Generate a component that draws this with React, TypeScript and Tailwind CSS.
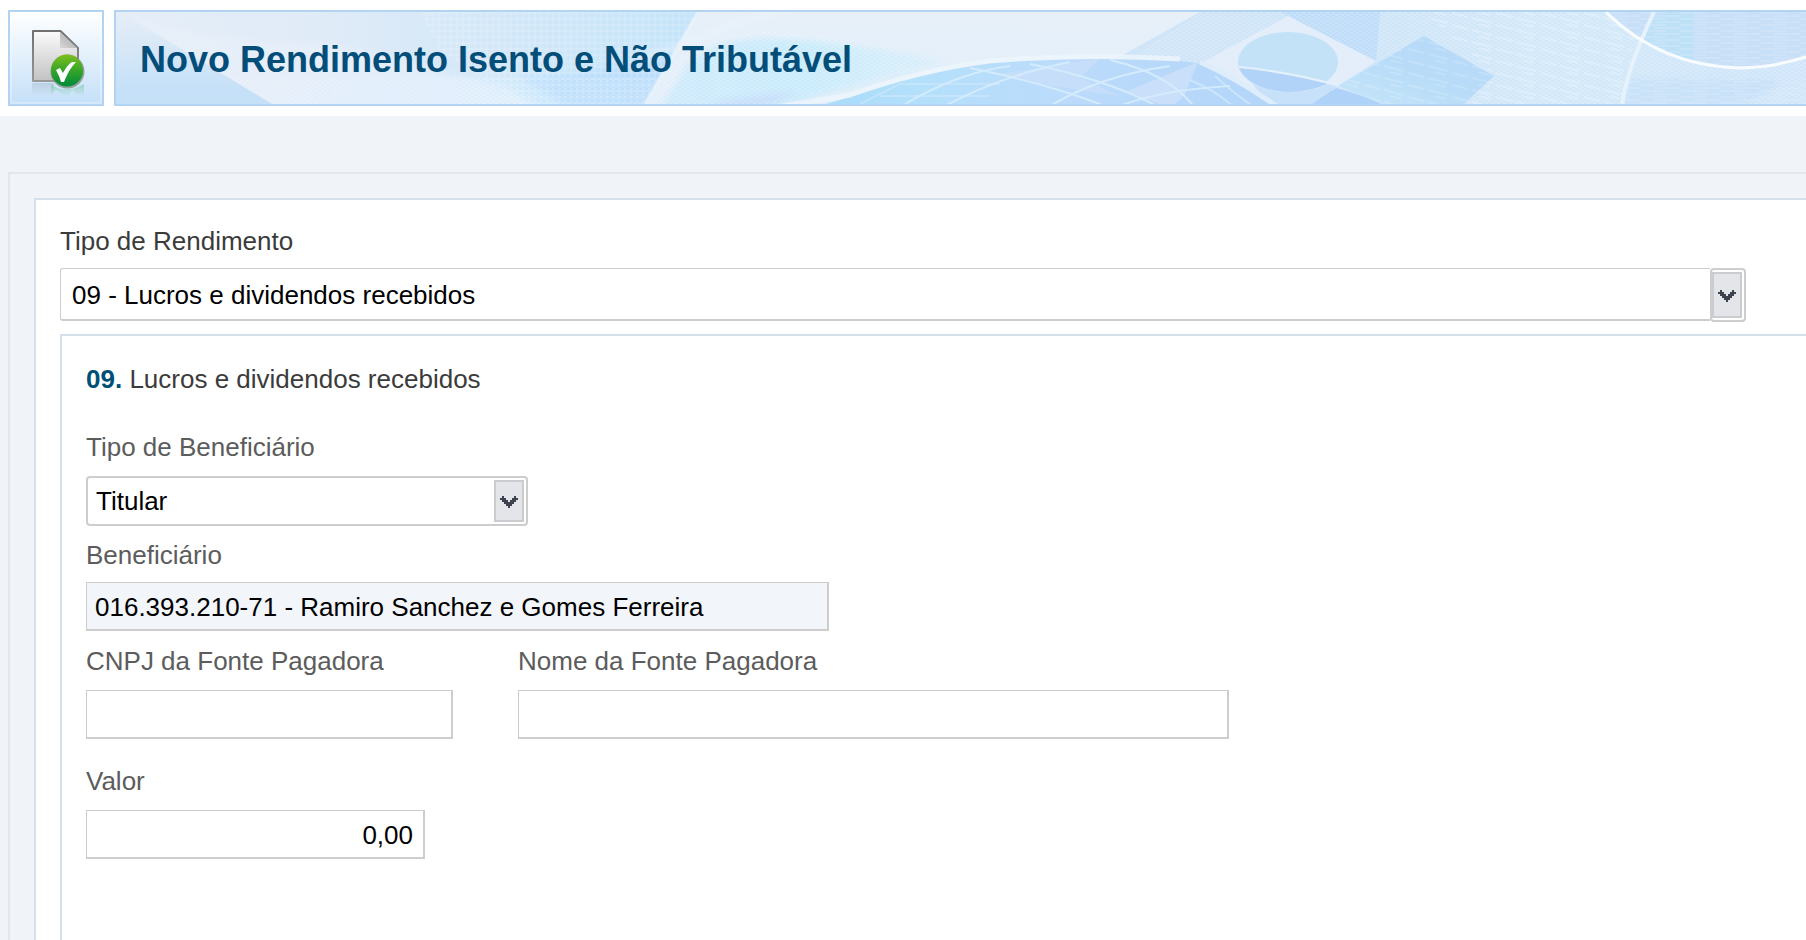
import type { ReactNode } from "react";

const fieldBorder = "border border-r-2 border-b-2 border-[#cdcdcd] outline-none";

function Chevron() {
  return (
    <svg className="w-[18px] h-3" viewBox="0 0 9 6" fill="#3d434d" shapeRendering="crispEdges" aria-hidden="true">
      <path d="M1 0h1v1h1v1h1v1h1v-1h1v-1h1v-1h1v1h1v1h-1v1h-1v1h-1v1h-1v1h-1v-1h-1v-1h-1v-1h-1v-1h-1v-1h1z" />
    </svg>
  );
}

function DocumentIcon() {
  return (
    <svg className="w-[60px] h-[76px]" viewBox="26 20 60 76" role="img" aria-label="Novo documento">
      <defs>
        <linearGradient id="paper" x1="0" y1="0" x2="0" y2="1">
          <stop offset="0" stopColor="#fbfbfb" />
          <stop offset="1" stopColor="#c2c2c2" />
        </linearGradient>
        <linearGradient id="edge" x1="0" y1="0" x2="0" y2="1">
          <stop offset="0" stopColor="#707070" />
          <stop offset="1" stopColor="#989898" />
        </linearGradient>
        <linearGradient id="fold" x1="0" y1="1" x2="1" y2="0">
          <stop offset="0" stopColor="#d6d6d6" />
          <stop offset="1" stopColor="#a4a4a4" />
        </linearGradient>
        <linearGradient id="ball" x1="0" y1="0" x2="0" y2="1">
          <stop offset="0" stopColor="#7fbf1c" />
          <stop offset="0.5" stopColor="#35a52a" />
          <stop offset="1" stopColor="#008a3a" />
        </linearGradient>
        <linearGradient id="shadow" x1="0" y1="0" x2="0" y2="1">
          <stop offset="0" stopColor="#9fb4c4" stopOpacity="0.45" />
          <stop offset="1" stopColor="#9fb4c4" stopOpacity="0" />
        </linearGradient>
        <linearGradient id="shadowGreen" x1="0" y1="0" x2="0" y2="1">
          <stop offset="0" stopColor="#6cc39a" stopOpacity="0.55" />
          <stop offset="1" stopColor="#6cc39a" stopOpacity="0" />
        </linearGradient>
      </defs>
      <rect x="32" y="83" width="22" height="13" fill="url(#shadow)" />
      <path d="M51 84q6 5 11 5h10q6-1 12-5v12h-6l-6-6-3 6h-6l-7-6-5 4z" fill="url(#shadowGreen)" />
      <path d="M33 31H60.500L78 48V81H33z" fill="url(#paper)" stroke="url(#edge)" strokeWidth="2" strokeLinejoin="round" />
      <path d="M60 32L77 48H60z" fill="url(#fold)" />
      <circle cx="67.500" cy="71.500" r="17" fill="#7d8a78" opacity="0.75" />
      <circle cx="67" cy="70.500" r="16" fill="url(#ball)" />
      <path d="M56 70l4-2 3 5q4-8 9-11h4q-7 7-12 20h-3q-2-7-5-12z" fill="#fff" />
    </svg>
  );
}

function BannerArt() {
  return (
    <svg className="absolute inset-0 w-full h-full" viewBox="116 12 1690 92" preserveAspectRatio="xMinYMin slice" aria-hidden="true">
      <defs>
        <linearGradient id="sky" x1="0" y1="0" x2="0" y2="1">
          <stop offset="0" stopColor="#e6eef8" />
          <stop offset="0.5" stopColor="#d3e6f7" />
          <stop offset="0.85" stopColor="#c5e0f8" />
          <stop offset="1" stopColor="#c4e1f8" />
        </linearGradient>
        <linearGradient id="ray" x1="0" y1="0" x2="1" y2="0">
          <stop offset="0" stopColor="#e5eef8" />
          <stop offset="0.35" stopColor="#e0ebf8" />
          <stop offset="0.6" stopColor="#d5e8f8" />
          <stop offset="1" stopColor="#c4e4f9" />
        </linearGradient>
        <linearGradient id="wave" x1="0" y1="0" x2="1" y2="0">
          <stop offset="0" stopColor="#deebf9" stopOpacity="0" />
          <stop offset="0.3" stopColor="#deedfa" />
          <stop offset="0.65" stopColor="#c8e6fb" />
          <stop offset="1" stopColor="#bddffb" />
        </linearGradient>
        <linearGradient id="dome" x1="0" y1="0" x2="1" y2="0">
          <stop offset="0" stopColor="#a3d8fa" />
          <stop offset="0.25" stopColor="#b3e0fb" />
          <stop offset="0.5" stopColor="#bcdbfb" />
          <stop offset="1" stopColor="#aed2f8" />
        </linearGradient>
        <linearGradient id="haze" x1="0" y1="0" x2="0" y2="1">
          <stop offset="0" stopColor="#e7f0f9" />
          <stop offset="1" stopColor="#e3effa" />
        </linearGradient>
        <linearGradient id="lagoon" x1="0" y1="0" x2="1" y2="0">
          <stop offset="0" stopColor="#cfeafb" />
          <stop offset="0.5" stopColor="#c9ebfb" />
          <stop offset="1" stopColor="#dceefa" />
        </linearGradient>
        <linearGradient id="mist" x1="0" y1="0" x2="1" y2="0">
          <stop offset="0" stopColor="#d2e6f6" />
          <stop offset="0.4" stopColor="#cee4f8" />
          <stop offset="0.7" stopColor="#d3e9f9" />
          <stop offset="1" stopColor="#d0e5f9" />
        </linearGradient>
        <linearGradient id="diamond" x1="0" y1="1" x2="1" y2="0">
          <stop offset="0" stopColor="#c5e5f9" />
          <stop offset="0.5" stopColor="#b8dcf8" />
          <stop offset="1" stopColor="#b5d8f8" />
        </linearGradient>
        <pattern id="mesh" width="6" height="6" patternUnits="userSpaceOnUse">
          <path d="M0 1h6M1 0v6" stroke="#fff" strokeWidth="1" opacity="0.25" />
        </pattern>
        <pattern id="grain" width="6" height="4" patternUnits="userSpaceOnUse">
          <path d="M0 1h3M3 3h3" stroke="#fff" strokeWidth="2" opacity="0.14" />
        </pattern>
        <pattern id="streaks" width="44" height="12" patternUnits="userSpaceOnUse">
          <path d="M0 1l16 4M20 6l20 5M26 0l12 3" stroke="#fff" strokeWidth="2" opacity="0.22" />
        </pattern>
        <pattern id="lines" width="40" height="6" patternUnits="userSpaceOnUse">
          <path d="M0 1h26M14 4h26" stroke="#e2edfa" strokeWidth="1" opacity="0.5" />
        </pattern>
        <filter id="soft" x="-5%" y="-20%" width="110%" height="140%">
          <feGaussianBlur stdDeviation="3" />
        </filter>
        <clipPath id="domeClip">
          <path d="M755 120Q800 112 850 97Q920 72 990 63Q1083 55 1180 61Q1270 70 1385 106V120z" />
        </clipPath>
        <clipPath id="leftClip">
          <path d="M120 12H698L645 104H272z" />
        </clipPath>
      </defs>

      <rect x="116" y="12" width="1690" height="92" fill="url(#sky)" />

      {/* left rays */}
      <g clipPath="url(#leftClip)">
        <path d="M120 12L272 104H645L698 12z" fill="url(#ray)" />
        <g filter="url(#soft)">
          <path d="M120 12Q200 40 300 44Q400 50 440 74L300 110H262z" fill="#e8f0f9" opacity="0.7" />
          <path d="M300 72Q400 74 510 76Q590 74 650 52L700 30L645 110H300z" fill="url(#wave)" />
          <path d="M262 112Q300 70 420 72Q500 76 545 112z" fill="#e2effb" opacity="0.8" />
          <path d="M520 78Q550 96 580 112H645L670 56Q600 76 520 78z" fill="#bbddfb" opacity="0.8" />
        </g>
        <path d="M420 12H698L645 104H520L440 50z" fill="url(#mesh)" />
        <path d="M230 78L272 104H645L660 78z" fill="url(#grain)" />
      </g>

      {/* centre haze */}
      <path d="M698 12H1200V104H645z" fill="url(#haze)" />
      <g filter="url(#soft)">
        <path d="M688 64Q710 38 770 38Q860 42 950 62Q860 84 770 108H660z" fill="url(#lagoon)" />
        <path d="M700 110Q730 94 800 92L760 110z" fill="#c6dcfa" opacity="0.8" />
      </g>
      <path d="M664 70Q700 36 760 32Q860 36 950 62Q860 84 760 106H645z" fill="url(#grain)" />
      <path d="M640 58Q690 44 724 28Q750 16 790 10" fill="none" stroke="#ebf4fc" strokeWidth="6" opacity="0.7" filter="url(#soft)" />
      <path d="M698 12L645 104" stroke="#e8f4fc" strokeWidth="3" opacity="0.8" />

      {/* right mist */}
      <path d="M1200 12H1806V104H1000L1110 62z" fill="url(#mist)" />
      <path d="M1200 12H1806V104H1060z" fill="url(#grain)" />
      <path d="M1424 12H1640L1622 104H1464L1494 76z" fill="url(#streaks)" />

      {/* dome */}
      <path d="M755 120Q800 112 850 97Q920 72 990 63Q1083 55 1180 61Q1270 70 1385 106V120z" fill="url(#dome)" />
      <g clipPath="url(#domeClip)" fill="none" stroke="#d3ebfc" strokeWidth="2">
        <path d="M1000 74L1100 58L1080 78L1120 96L1040 84z" fill="#cfe0fa" stroke="none" opacity="0.6" />
        <path d="M1198 62L1125 92L1170 108L1184 96z" fill="#c9dffa" stroke="none" />
        <path d="M905 104Q960 72 1010 66M945 106Q1000 76 1070 62M1050 106Q1100 76 1170 66M1120 106Q1160 90 1230 86" />
        <path d="M970 68Q1050 84 1110 108M1030 64Q1110 80 1160 108M1110 60Q1170 74 1195 108" />
        <path d="M860 104L900 84H1000M880 96H990" strokeWidth="1" />
        <path d="M1215 76Q1230 90 1255 108M1190 80Q1215 90 1235 108" strokeWidth="2" opacity="0.7" />
      </g>
      <path d="M740 112Q800 104 850 95Q920 70 990 61Q1083 53 1180 59" fill="none" stroke="#edf5fc" strokeWidth="5" opacity="0.8" />

      {/* flag */}
      <path d="M1280 12H1380L1376 62L1288 16z" fill="#bfddf8" />
      <path d="M1280 12H1380L1376 62L1288 16z" fill="url(#grain)" />
      <path d="M1203 62L1288 16L1376 61L1338 86L1312 104H1270z" fill="#e3eefa" />
      <path d="M1252 84Q1288 100 1330 84L1338 86L1312 104H1270z" fill="#c8e1fa" />
      <ellipse cx="1288" cy="62" rx="50" ry="30" fill="#c3e2f8" />
      <path d="M1239 68Q1290 70 1328 84Q1308 92 1288 92Q1250 90 1239 68z" fill="#b1d3f8" />
      <path d="M1239 67Q1290 72 1340 86Q1364 94 1386 104" fill="none" stroke="#e4f1fc" strokeWidth="2" />
      <path d="M1200 62Q1240 80 1276 106" fill="none" stroke="#deedfb" strokeWidth="5" />
      <path d="M1424 36L1494 76L1464 104H1384L1338 86z" fill="url(#diamond)" />
      <path d="M1424 36L1494 76L1464 104H1384L1338 86z" fill="url(#streaks)" opacity="0.7" />
      <path d="M1312 104L1336 88Q1360 94 1382 104z" fill="#afd3f8" />

      {/* right arc */}
      <path d="M1606 12Q1660 66 1740 68Q1775 67 1806 57V12z" fill="#c8e0f7" />
      <path d="M1654 12H1694V62Q1665 54 1640 42z" fill="#bfe1f7" />
      <path d="M1606 12Q1660 66 1740 68Q1775 67 1806 57V12z" fill="url(#lines)" />
      <path d="M1630 78L1622 106H1740L1790 80z" fill="#c3dff8" opacity="0.6" filter="url(#soft)" />
      <path d="M1628 76H1806V104H1622z" fill="url(#lines)" />
      <path d="M1654 12Q1628 66 1622 104" fill="none" stroke="#e6f3fc" strokeWidth="4" />
      <path d="M1606 12Q1660 66 1740 68Q1775 67 1806 57" fill="none" stroke="#f8fcff" strokeWidth="3" />
    </svg>
  );
}

type FieldProps = { id: string; label: string; className?: string; children: ReactNode };

function Field({ id, label, className = "", children }: FieldProps) {
  return (
    <div className={`flex flex-col ${className}`}>
      <label htmlFor={id} className="text-[#5c5c5c]">{label}</label>
      {children}
    </div>
  );
}

export default function App() {
  return (
    <div className="min-h-screen flex flex-col overflow-hidden bg-[#f0f3f8] font-['Liberation_Sans',Arial,sans-serif] text-[26px] leading-[30px] text-black">
      <header className="flex gap-[10px] bg-white py-[10px] pl-2">
        <div className="w-24 h-24 shrink-0 flex items-center justify-center border-2 border-[#b2d3f2] bg-linear-to-b from-white to-[#c5e0f8] shadow-[inset_0_0_0_2px_rgba(255,255,255,0.3)]">
          <DocumentIcon />
        </div>
        <div className="relative flex-1 h-24 flex items-center overflow-hidden border-2 border-r-0 border-[#b2d3f2] pl-6">
          <BannerArt />
          <h1 className="relative pt-1 text-4xl leading-10 font-bold text-[#034d79]">Novo Rendimento Isento e Não Tributável</h1>
        </div>
      </header>

      <main className="flex-1 flex flex-col mt-14 ml-2 border-t-2 border-l-2 border-[#e5e6e9] pt-6 pl-6">
        <form className="flex-1 flex flex-col border-t-2 border-l-2 border-[#d5dfea] bg-white pt-[26px] pl-6">
          <label htmlFor="tipo-rendimento" className="text-[#3b3b3b]">Tipo de Rendimento</label>
          <div className="relative mt-3 mr-[60px] h-[54px] pr-9">
            <select id="tipo-rendimento" className="w-full h-[53px] appearance-none rounded-l-[3px] border border-r-0 border-b-2 border-[#cdcdcd] bg-white pt-0.5 pl-[11px] outline-none">
              <option>09 - Lucros e dividendos recebidos</option>
            </select>
            <span className="pointer-events-none absolute right-0 inset-y-0 w-9 rounded-[4px] border-2 border-[#cdcdcd] bg-white py-0.5 pr-0.5">
              <span className="flex h-full items-center justify-center border-2 border-[#cbccd0] bg-[#e3e5e9] pt-0.5">
                <Chevron />
              </span>
            </span>
          </div>

          <section className="flex-1 mt-3 border-t-2 border-l-2 border-[#d5dfea] pt-7 pl-6">
            <h2 className="text-[#3b3b3b]">
              <b className="text-[#004f75]">09.</b> Lucros e dividendos recebidos
            </h2>

            <Field id="tipo-beneficiario" label="Tipo de Beneficiário" className="mt-[38px]">
              <div className="relative mt-[14px] w-[442px] h-[50px]">
                <select id="tipo-beneficiario" className="w-full h-full appearance-none rounded-[4px] border-2 border-[#cdcdcd] bg-white pl-2 outline-none">
                  <option>Titular</option>
                </select>
                <span className="pointer-events-none absolute right-1 inset-y-1 w-[30px] flex items-center justify-center border-2 border-[#cbccd0] bg-[#e3e5e9] pt-0.5">
                  <Chevron />
                </span>
              </div>
            </Field>

            <Field id="beneficiario" label="Beneficiário" className="mt-[14px]">
              <input id="beneficiario" readOnly defaultValue="016.393.210-71 - Ramiro Sanchez e Gomes Ferreira" className={`mt-3 w-[743px] h-[49px] bg-[#f2f5fa] pt-0.5 pl-2 ${fieldBorder}`} />
            </Field>

            <div className="flex gap-[65px] mt-[15px]">
              <Field id="cnpj" label="CNPJ da Fonte Pagadora">
                <input id="cnpj" className={`mt-[14px] w-[367px] h-[49px] bg-white pt-0.5 px-2 ${fieldBorder}`} />
              </Field>
              <Field id="nome" label="Nome da Fonte Pagadora">
                <input id="nome" className={`mt-[14px] w-[711px] h-[49px] bg-white pt-0.5 px-2 ${fieldBorder}`} />
              </Field>
            </div>

            <Field id="valor" label="Valor" className="mt-[27px]">
              <input id="valor" inputMode="decimal" defaultValue="0,00" className={`mt-[14px] w-[339px] h-[49px] bg-white pt-0.5 pr-[10px] text-right ${fieldBorder}`} />
            </Field>
          </section>
        </form>
      </main>
    </div>
  );
}
